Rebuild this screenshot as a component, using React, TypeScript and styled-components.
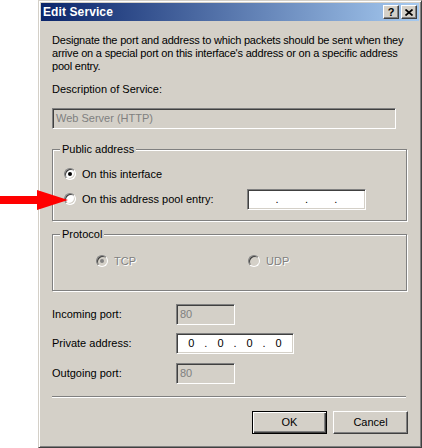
import React, { FunctionComponent } from "react";
import styled, { createGlobalStyle, css } from "styled-components";

// colours of the classic windows look
const face = "#D4D0C8";
const shadow = "#808080";
const darkShadow = "#404040";
const light = "#FFFFFF";

const GlobalStyle = createGlobalStyle`
  html, body {
    margin: 0;
    padding: 0;
    background: #ffffff;
  }
  body {
    font-family: "Liberation Sans", Arial, sans-serif;
    font-size: 11px;
    color: #000;
  }
`;

const Page = styled.div`
  position: relative;
  width: 422px;
  height: 448px;
  padding-left: 38px;
  box-sizing: border-box;
  display: flex;
`;

const Window = styled.div`
  width: 384px;
  height: 448px;
  box-sizing: border-box;
  background: ${face};
  border: 1px solid;
  border-color: ${face} ${darkShadow} ${darkShadow} ${face};
  box-shadow: inset 1px 1px 0 ${light}, inset -1px -1px 0 ${shadow};
  padding: 2px;
  display: flex;
  flex-direction: column;
`;

const TitleBar = styled.div`
  height: 18px;
  display: flex;
  align-items: center;
  padding: 0 2px 0 2px;
  background: linear-gradient(to right, #0a246a, #a6caf0);
`;

const TitleText = styled.span`
  flex: 1;
  color: #fff;
  font-weight: bold;
  font-size: 12px;
  letter-spacing: 0.1px;
`;

const raised = css`
  background: ${face};
  border: 1px solid;
  border-color: ${light} ${darkShadow} ${darkShadow} ${light};
  box-shadow: inset -1px -1px 0 ${shadow}, inset 1px 1px 0 ${face};
  box-sizing: border-box;
`;

const CaptionButton = styled.div`
  ${raised};
  width: 16px;
  height: 14px;
  display: flex;
  align-items: center;
  justify-content: center;
  font-weight: bold;
  font-size: 11px;
  line-height: 1;
  margin-left: ${(p: { $gap?: number }) => p.$gap ?? 0}px;
`;

const Body = styled.div`
  flex: 1;
  padding: 13px 11px 0 11px;
  display: flex;
  flex-direction: column;
  line-height: 13px;
`;

const Intro = styled.p`
  margin: 0;
  white-space: nowrap;
  letter-spacing: -0.2px;
`;

const Caption = styled.div`
  margin-top: ${(p: { $top: number }) => p.$top}px;
`;

const Field = styled.div<{ $width: number; $disabled?: boolean; $top?: number }>`
  width: ${(p) => p.$width}px;
  height: 21px;
  box-sizing: border-box;
  margin-top: ${(p) => p.$top ?? 0}px;
  background: ${(p) => (p.$disabled ? face : "#fff")};
  color: ${(p) => (p.$disabled ? shadow : "#000")};
  border: 1px solid;
  border-color: ${shadow} ${light} ${light} ${shadow};
  box-shadow: inset 1px 1px 0 ${darkShadow}, inset -1px -1px 0 ${face};
  padding: 0 3px;
  display: flex;
  align-items: center;
  flex-shrink: 0;
`;

const IpSeg = styled.span`
  width: 23px;
  text-align: center;
`;

const IpDot = styled.span`
  width: 6.5px;
  text-align: center;
`;

const Group = styled.div<{ $top: number; $height: number; $padTop: number; $padLeft: number }>`
  position: relative;
  margin-top: ${(p) => p.$top}px;
  width: calc(100% - 1px);
  height: ${(p) => p.$height}px;
  box-sizing: border-box;
  border: 1px solid ${shadow};
  box-shadow: inset 1px 1px 0 ${light}, 1px 1px 0 ${light};
  padding: ${(p) => p.$padTop}px 0 0 ${(p) => p.$padLeft}px;
  display: flex;
  flex-direction: column;
`;

const GroupTitle = styled.span`
  position: absolute;
  top: -7px;
  left: 7px;
  padding: 0 2px;
  background: ${face};
`;

const Row = styled.div<{ $height: number; $top?: number }>`
  display: flex;
  align-items: center;
  height: ${(p) => p.$height}px;
  margin-top: ${(p) => p.$top ?? 0}px;
`;

const Option = styled.div<{ $width?: number; $disabled?: boolean }>`
  display: flex;
  align-items: center;
  width: ${(p) => (p.$width ? `${p.$width}px` : "auto")};
  color: ${(p) => (p.$disabled ? shadow : "#000")};
  text-shadow: ${(p) => (p.$disabled ? `1px 1px 0 ${light}` : "none")};
  flex-shrink: 0;
`;

const RadioDot = styled.span<{ $checked?: boolean; $disabled?: boolean }>`
  position: relative;
  width: 12px;
  height: 12px;
  box-sizing: border-box;
  border-radius: 50%;
  margin-right: 6px;
  background: ${(p) => (p.$disabled ? face : "#fff")};
  border: 1px solid;
  border-color: ${shadow} ${light} ${light} ${shadow};
  box-shadow: inset 1px 1px 0 ${darkShadow}, inset -1px -1px 0 ${face};
  &::after {
    content: "";
    display: ${(p) => (p.$checked ? "block" : "none")};
    position: absolute;
    left: 3px;
    top: 3px;
    width: 4px;
    height: 4px;
    border-radius: 50%;
    background: ${(p) => (p.$disabled ? shadow : "#000")};
  }
`;

const PortRow = styled.div<{ $top: number }>`
  display: flex;
  align-items: center;
  height: 21px;
  margin-top: ${(p) => p.$top}px;
`;

const PortLabel = styled.span`
  width: 124px;
  flex-shrink: 0;
`;

const Separator = styled.div`
  margin-top: 12px;
  width: calc(100% - 2px);
  border-top: 1px solid ${shadow};
  border-bottom: 1px solid ${light};
`;

const Buttons = styled.div`
  margin-top: 13px;
  display: flex;
  justify-content: flex-end;
  gap: 6px;
`;

const PushButton = styled.div<{ $default?: boolean }>`
  ${raised};
  width: 75px;
  height: 23px;
  display: flex;
  align-items: center;
  justify-content: center;
  ${(p) =>
    p.$default &&
    css`
      border: 1px solid #000;
      box-shadow: inset 1px 1px 0 ${light}, inset -1px -1px 0 ${darkShadow},
        inset -2px -2px 0 ${shadow};
    `}
`;

const Arrow = styled.svg`
  position: absolute;
  left: 0;
  top: 189px;
`;

type RadioProps = {
  label: string;
  checked?: boolean;
  disabled?: boolean;
  width?: number;
};

const Radio: FunctionComponent<RadioProps> = ({ label, checked, disabled, width }) => (
  <Option $width={width} $disabled={disabled}>
    <RadioDot $checked={checked} $disabled={disabled} />
    {label}
  </Option>
);

const IpField: FunctionComponent<{ values: string[]; width: number }> = ({ values, width }) => (
  <Field $width={width}>
    {values.map((v, i) => (
      <React.Fragment key={i}>
        {i > 0 && <IpDot>.</IpDot>}
        <IpSeg>{v}</IpSeg>
      </React.Fragment>
    ))}
  </Field>
);

const App: FunctionComponent = () => {
  return (
    <>
      <GlobalStyle />
      <Page>
        <Window>
          <TitleBar>
            <TitleText>Edit Service</TitleText>
            <CaptionButton>?</CaptionButton>
            <CaptionButton $gap={2}>
              <svg width="8" height="7" viewBox="0 0 8 7">
                <path d="M0.5 0.5 L7.5 6.5 M7.5 0.5 L0.5 6.5" stroke="#000" strokeWidth="1.7" />
              </svg>
            </CaptionButton>
          </TitleBar>
          <Body>
            <Intro>
              Designate the port and address to which packets should be sent when they
              <br />
              arrive on a special port on this interface's address or on a specific address
              <br />
              pool entry.
            </Intro>
            <Caption $top={10}>Description of Service:</Caption>
            <Field $width={344} $disabled $top={12}>
              Web Server (HTTP)
            </Field>

            <Group $top={20} $height={72} $padTop={16} $padLeft={11}>
              <GroupTitle>Public address</GroupTitle>
              <Row $height={16}>
                <Radio label="On this interface" checked />
              </Row>
              <Row $height={22} $top={6}>
                <Radio label="On this address pool entry:" width={183} />
                <IpField values={["", "", "", ""]} width={119} />
              </Row>
            </Group>

            <Group $top={13} $height={57} $padTop={18} $padLeft={43}>
              <GroupTitle>Protocol</GroupTitle>
              <Row $height={16}>
                <Radio label="TCP" checked disabled width={152} />
                <Radio label="UDP" disabled />
              </Row>
            </Group>

            <PortRow $top={13}>
              <PortLabel>Incoming port:</PortLabel>
              <Field $width={59} $disabled>
                80
              </Field>
            </PortRow>
            <PortRow $top={8}>
              <PortLabel>Private address:</PortLabel>
              <IpField values={["0", "0", "0", "0"]} width={118} />
            </PortRow>
            <PortRow $top={9}>
              <PortLabel>Outgoing port:</PortLabel>
              <Field $width={59} $disabled>
                80
              </Field>
            </PortRow>

            <Separator />
            <Buttons>
              <PushButton $default>OK</PushButton>
              <PushButton>Cancel</PushButton>
            </Buttons>
          </Body>
        </Window>
        {/* red pointer arrow */}
        <Arrow width="70" height="22" viewBox="0 0 70 22">
          <polygon points="0,7 37,7 37,1 68,11 37,21 37,15 0,15" fill="#ff0000" />
        </Arrow>
      </Page>
    </>
  );
};

export default App;
